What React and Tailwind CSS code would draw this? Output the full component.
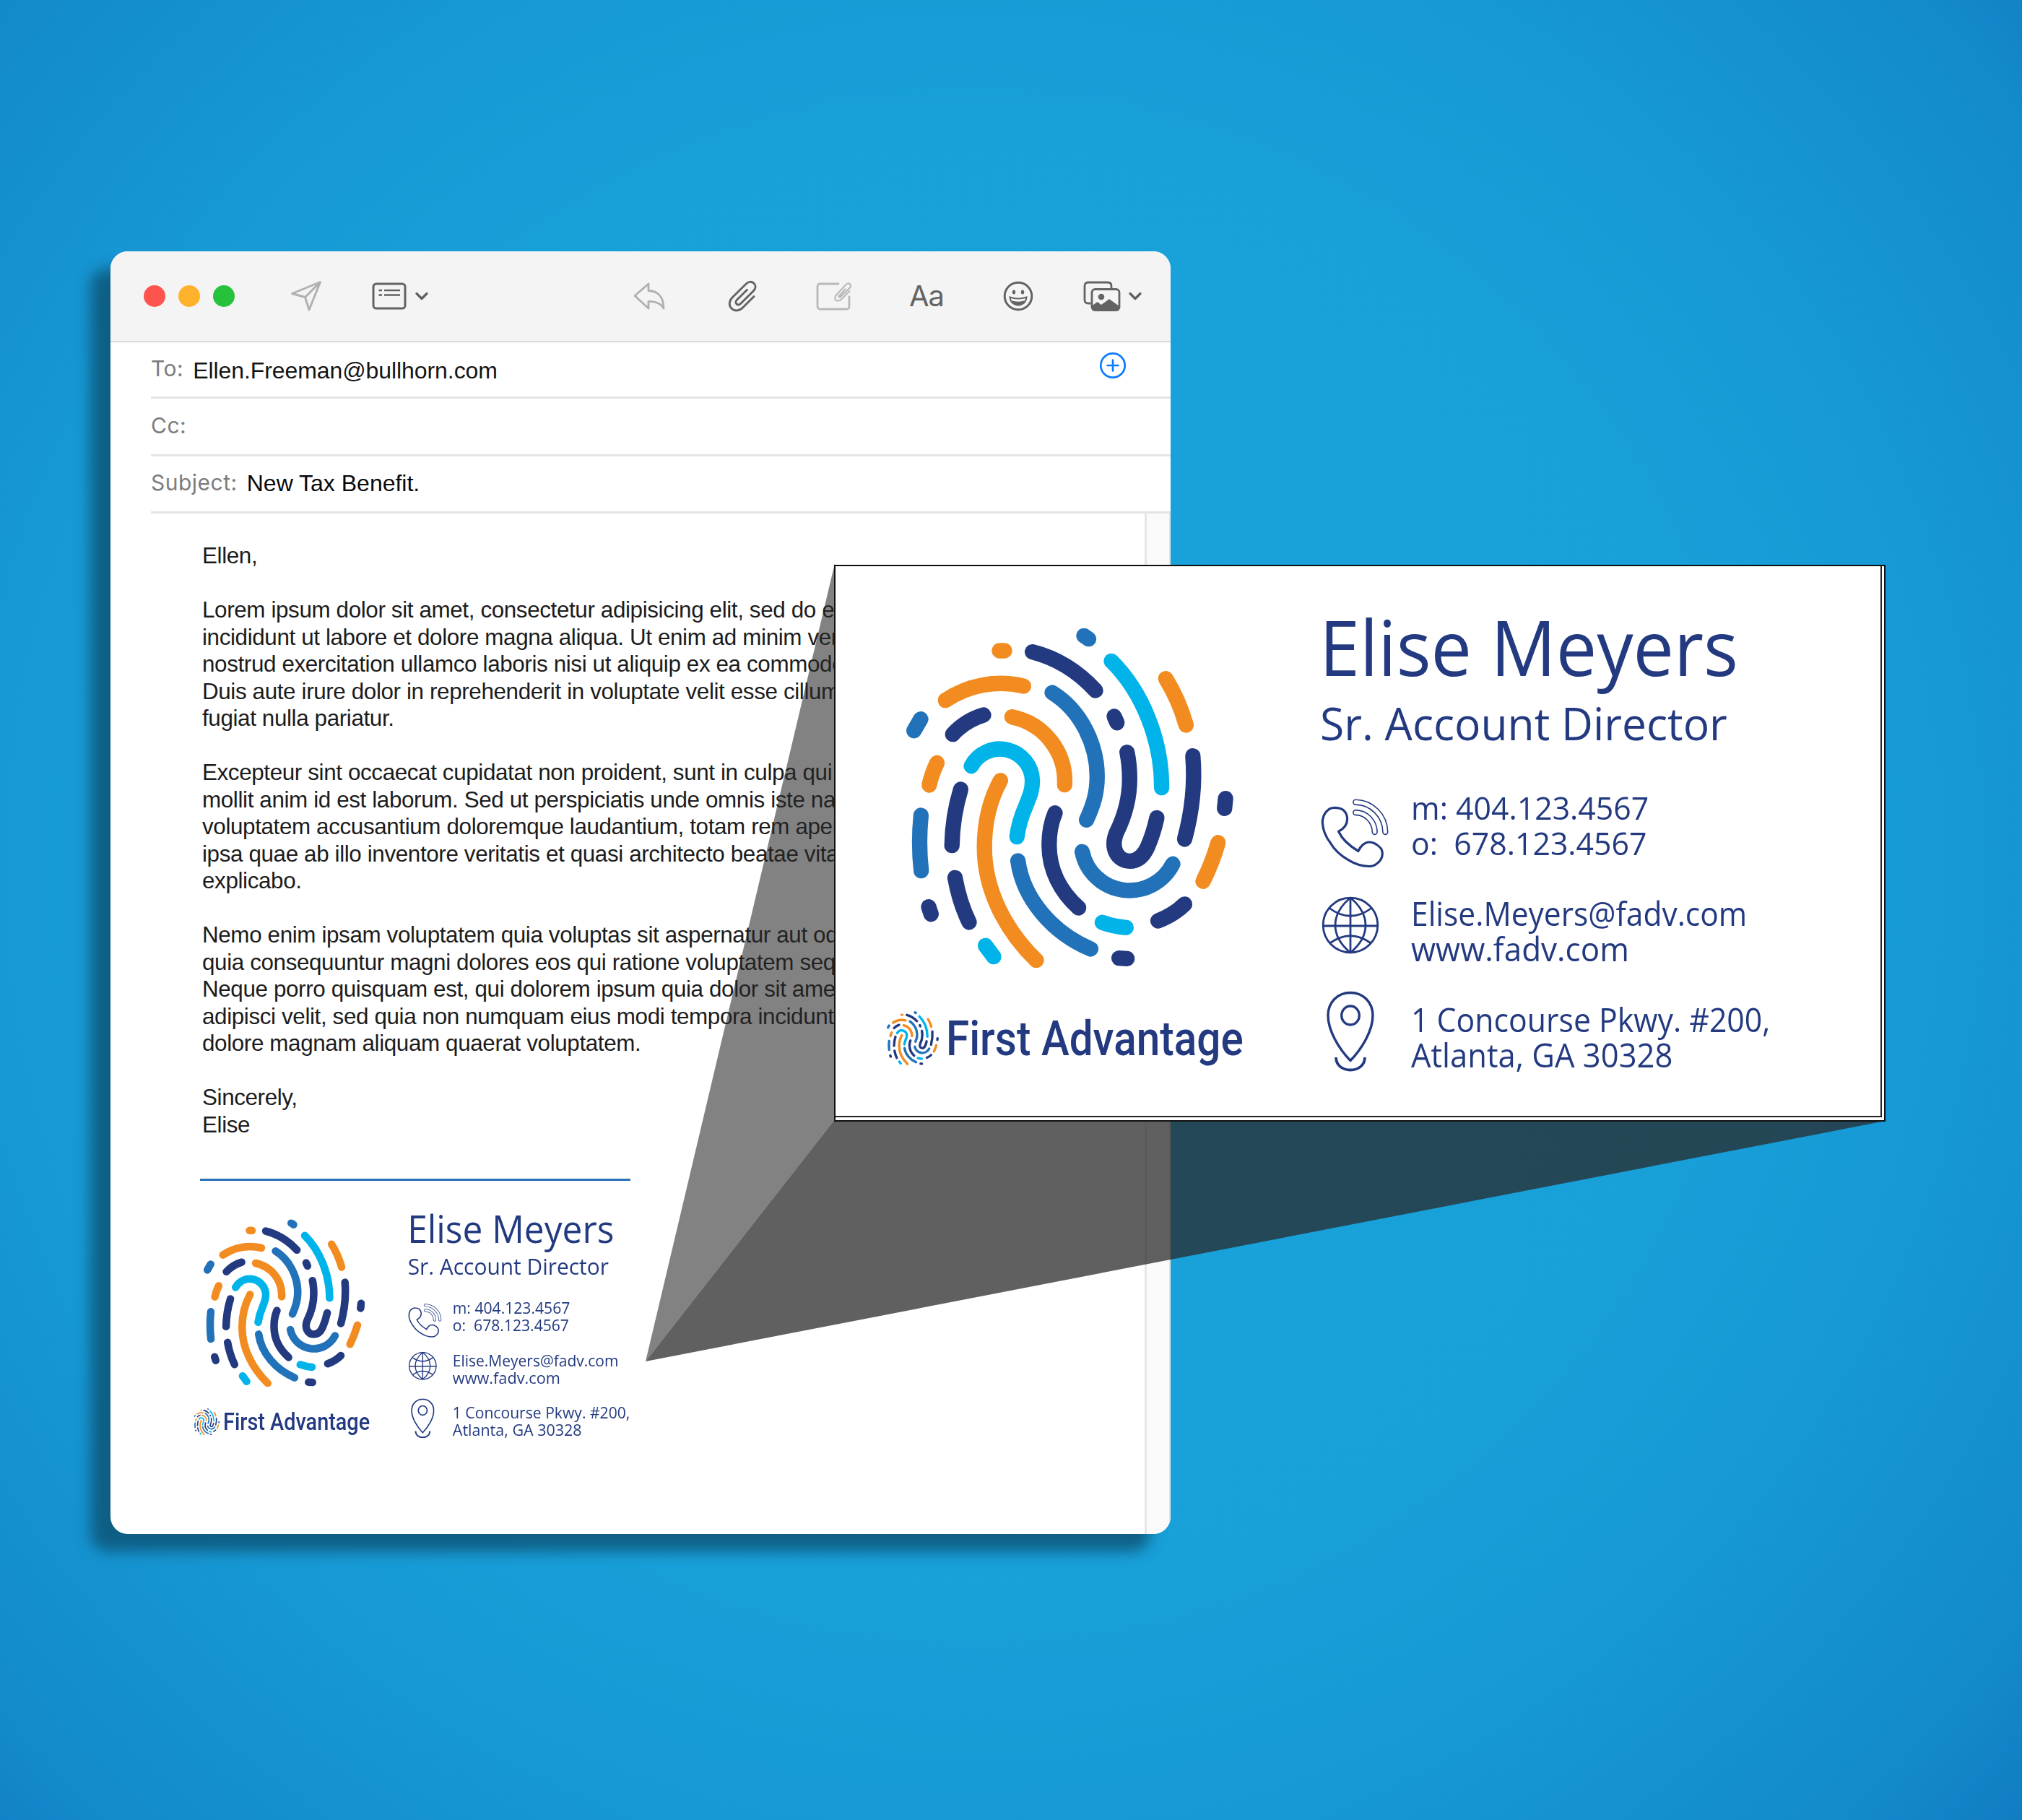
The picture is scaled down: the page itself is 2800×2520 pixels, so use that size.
const NAVY = "#233a80";
const BLUE = "#2272b9";
const CYAN = "#00b4ea";
const ORANGE = "#f28c20";

const RIDGES = [
  [BLUE, "M301 40.3 L307.5 44.7"],
  [ORANGE, "M184 61 L191 61"],
  [NAVY, "M229.6 62.7 Q279 75 317 116"],
  [CYAN, "M339 75.3 C382 118 409 185 408.6 250.7"],
  [ORANGE, "M414.3 99.7 Q432 128 442.5 164"],
  [ORANGE, "M109.3 129.7 A137 137 0 0 1 217.5 110"],
  [ORANGE, "M201.4 152.7 A91 91 0 0 1 274.3 246.7"],
  [CYAN, "M145 220.7 A45 45 0 0 1 229.6 241 C229.6 256 225 264 220.5 276 C213 293 210 305 208.2 318.7"],
  [NAVY, "M119.3 176.7 A94 94 0 0 1 162 150"],
  [BLUE, "M75 155.7 L65.7 171.7"],
  [ORANGE, "M97.5 216.3 Q90 232 86.8 247"],
  [NAVY, "M130.4 253 Q119 290 118.2 330.7"],
  [BLUE, "M75.4 289 Q71.4 328 75.7 365.7"],
  [BLUE, "M257 119 C296 143 319.3 190 319.3 235 C319.3 258 314 275 304.6 295.3"],
  [NAVY, "M342.9 152 L346.8 160.7"],
  [NAVY, "M360.7 201.7 Q364.3 219 364.3 238 C364.3 272 354 297 346 313 C337 335 348 352.3 364.3 352.3 C376 352.3 384 344 389 333 Q397 315 402 292.3"],
  [NAVY, "M451.8 206.7 Q456.5 263 440.4 322"],
  [NAVY, "M497.1 265.7 L495.7 279.3"],
  [ORANGE, "M486.8 326.7 Q479 354 466 380.3"],
  [NAVY, "M440.4 412 Q425 427 403.6 435"],
  [BLUE, "M298.6 339.3 A67 67 0 0 0 424 356.3"],
  [NAVY, "M261 285.7 C254 302 252.8 316 252.8 330 C252.8 364 268 394 293.6 417"],
  [ORANGE, "M185.4 240.7 C170 269 163.2 300 163.2 333 C163.2 392 192 448 235 489.7"],
  [BLUE, "M209.6 352 C217 405 258 452 310.4 474"],
  [CYAN, "M326.4 437.3 Q342 443 359.3 444.3"],
  [NAVY, "M349.6 486.7 L360.7 487.3"],
  [CYAN, "M164.6 469.3 L176 484.7"],
  [NAVY, "M122.5 375.3 Q128.5 408.8 142 437"],
  [NAVY, "M86 415.7 L89.3 425.7"],
];

function Fingerprint({ className }) {
  return (
    <svg viewBox="55 30 453 470" className={className} fill="none" strokeWidth="21.3" strokeLinecap="round">
      {RIDGES.map(([color, d]) => (
        <path key={d} d={d} stroke={color} />
      ))}
    </svg>
  );
}

function PhoneIcon() {
  return (
    <svg viewBox="28 27 96 96" className="h-24 w-24" fill="none" stroke={NAVY} strokeLinejoin="round" strokeLinecap="round">
      <path
        strokeWidth="3.2"
        d="M47.8 39.3 C39 39.3 31.3 48 31.3 60 C32 72 36 80 42.4 88.3 C48 98 57 106 67 111.7 C77 118 87 120.5 96 120.5 C101 120.5 103 119.5 105 118 C111 114 114.3 109 114.3 103.5 C114.3 99 113.5 97 111.6 95 C106 89 101 87 96 87 C90 87 84 92 81 99.5 C70 93 59 84 53.5 72.3 C60 69 65.6 63 65.6 55 C65.6 49 63 45 60 42.5 C57 40 52 39.3 47.8 39.3 Z"
      />
      <path strokeWidth="8.4" d="M77.3 31.7 A41.5 42 0 0 1 118.3 73" />
      <path strokeWidth="5.2" stroke="#fff" d="M77.3 31.7 A41.5 42 0 0 1 118.3 73" />
      <path strokeWidth="8.4" d="M77.3 46 A27 27.5 0 0 1 103.7 73" />
      <path strokeWidth="5.2" stroke="#fff" d="M77.3 46 A27 27.5 0 0 1 103.7 73" />
    </svg>
  );
}

function GlobeIcon() {
  return (
    <svg viewBox="0 0 80 80" className="h-20 w-20" fill="none" stroke={NAVY} strokeWidth="2.8">
      <circle cx="40" cy="40" r="37.8" />
      <path d="M40 2 V78 M2 41 H78" />
      <path d="M40 2 C12 25 12 55 40 78 C68 55 68 25 40 2" />
      <path d="M11 16.5 Q40 38 69 16.5 M11.5 65 Q40 44.5 68.5 65" />
    </svg>
  );
}

function PinIcon() {
  return (
    <svg viewBox="0 0 66 112" className="h-28 w-[66px]" fill="none" stroke={NAVY} strokeLinejoin="round">
      <path strokeWidth="3.4" d="M33 2.5 C15 2.5 2 16 2 34 C2 55 17 80 33 96.5 C49 80 64 55 64 34 C64 16 51 2.5 33 2.5 Z" />
      <ellipse strokeWidth="3.4" cx="33" cy="34" rx="12.3" ry="13" />
      <path strokeWidth="3.8" d="M13 92 C13 103 22 109.5 33 109.5 C44 109.5 53 103 53 92" />
    </svg>
  );
}

function Line({ children, className }) {
  return <div className={`origin-left whitespace-pre ${className}`}>{children}</div>;
}

/* Signature artwork at full size; the mail body shows the same block scaled down. */
function Signature() {
  return (
    <div className="flex h-[770px] w-[1455px] pl-[72px] font-['Open_Sans','Noto_Sans',sans-serif] text-[#233a80]">
      <div className="w-[600px] shrink-0 pt-[88px]">
        <Fingerprint className="ml-[27px] h-[470px] w-[453px]" />
        <div className="mt-[60px] flex">
          <Fingerprint className="h-[75px] w-[72px]" />
          <Line className="ml-[10px] h-[80px] w-[420px] scale-x-[0.886] font-['Roboto',sans-serif] text-[66px] leading-[78px] font-medium">
            First Advantage
          </Line>
        </div>
      </div>
      <div className="flex flex-col pt-[48px]">
        <Line className="ml-[-1px] h-[130px] w-[600px] scale-x-[0.94] text-[107px] leading-[130px]">Elise Meyers</Line>
        <Line className="mt-[1px] h-[80px] w-[600px] scale-x-[0.977] text-[62px] leading-[80px]">Sr. Account Director</Line>
        <div className="mt-[53px] flex h-[98px]">
          <div className="w-[126px] pt-[12px]">
            <PhoneIcon />
          </div>
          <div className="text-[44px] leading-[49px]">
            <Line className="w-[360px] scale-x-[0.973]">m: 404.123.4567</Line>
            <Line className="w-[360px] scale-x-[0.973]">{"o:  678.123.4567"}</Line>
          </div>
        </div>
        <div className="mt-[48px] flex h-[98px]">
          <div className="w-[126px] pt-px pl-[2px]">
            <GlobeIcon />
          </div>
          <div className="text-[45px] leading-[49px]">
            <Line className="w-[500px] scale-x-[0.945]">Elise.Meyers@fadv.com</Line>
            <Line className="w-[500px] scale-x-[0.978]">www.fadv.com</Line>
          </div>
        </div>
        <div className="mt-[32px] flex">
          <div className="w-[126px] pt-[2px] pl-[9px]">
            <PinIcon />
          </div>
          <div className="pt-[17px] text-[45px] leading-[49px]">
            <Line className="w-[520px] scale-x-[0.951]">1 Concourse Pkwy. #200,</Line>
            <Line className="w-[520px] scale-x-[0.968]">Atlanta, GA 30328</Line>
          </div>
        </div>
      </div>
    </div>
  );
}

function Chevron({ className }) {
  return (
    <svg viewBox="0 0 18 12" className={className} fill="none" stroke="#5f5f5f" strokeWidth="3.2" strokeLinecap="round" strokeLinejoin="round">
      <path d="M2 2.5 L9 9.5 L16 2.5" />
    </svg>
  );
}

function Toolbar() {
  return (
    <div className="flex h-[126px] items-center border-b-[2px] border-[#dadada] bg-[#f5f4f5] pl-[46px]">
      <span className="h-[30px] w-[30px] rounded-full bg-[#fe544e]" />
      <span className="ml-[18px] h-[30px] w-[30px] rounded-full bg-[#feb12b]" />
      <span className="ml-[18px] h-[30px] w-[30px] rounded-full bg-[#26c23c]" />
      <svg viewBox="0 0 44 44" className="ml-[77px] h-11 w-11" fill="none" stroke="#b0b0b0" strokeWidth="2.9" strokeLinejoin="round">
        <path d="M41.5 2.5 L2.5 18.5 L20.5 23.5 L26 41 Z M41.5 2.5 L20.5 23.5" />
      </svg>
      <svg viewBox="0 0 48 38" className="ml-[69px] h-[38px] w-12" fill="none" stroke="#636363" strokeWidth="3">
        <rect x="2" y="2" width="44" height="34" rx="4" />
        <path strokeWidth="2.4" d="M9.5 11 H14 M17 11 H39 M9.5 17.5 H14 M17 17.5 H39" />
      </svg>
      <Chevron className="ml-[12px] h-3 w-[18px]" />
      <svg viewBox="0 0 44 38" className="ml-[284px] h-[38px] w-11" fill="none" stroke="#b0b0b0" strokeWidth="2.8" strokeLinejoin="round">
        <path d="M21 2 L2 18.5 L21 36 V26.5 C31 26 37.5 28.5 42 36 C42 21 35 12 21 11.5 Z" />
      </svg>
      <svg viewBox="0 0 40 44" className="ml-[87px] h-11 w-10" fill="none" stroke="#636363" strokeWidth="2.9" strokeLinecap="round">
        <path d="M36 22.5 L20.5 38 C16 42.5 9.5 43.5 5.2 39.2 C0.8 35 1.6 28.5 6 24 L25.5 4.8 C28.5 1.8 33 1.4 36 4.2 C39 7.2 38.5 11.6 35.5 14.7 L17.5 32.5 C15.8 34.2 13.6 34.4 12 32.9 C10.4 31.3 10.7 29 12.4 27.3 L26.5 13.2" />
      </svg>
      <svg viewBox="0 0 50 40" className="ml-[82px] h-10 w-[50px]" fill="none" stroke="#b9b9b9" strokeWidth="2.8" strokeLinecap="round">
        <path d="M31 3 H6 Q2 3 2 7 V34 Q2 38 6 38 H42 Q46 38 46 34 V21" />
        <path strokeWidth="2.2" d="M46.5 13 L35 24.5 C32.5 27 29 27 27.5 25.5 C25.7 23.5 26 20.5 28 18.5 L41.5 4 C43.5 2 45.5 2 47 3.4 C48.5 5 48.2 7 46.8 8.5 L34 21 C33 22 31.6 21.8 31.6 20.2 L40.5 10.5" />
      </svg>
      <span className="ml-[79px] w-[52px] font-['Inter',sans-serif] text-[40px] leading-none tracking-[-1px] text-[#636363]">Aa</span>
      <svg viewBox="0 0 42 42" className="ml-[78px] h-[42px] w-[42px]" fill="none" stroke="#636363" strokeWidth="3">
        <circle cx="21" cy="21" r="18.8" />
        <ellipse cx="15" cy="15.5" rx="2.2" ry="3" fill="#636363" stroke="none" />
        <ellipse cx="27" cy="15.5" rx="2.2" ry="3" fill="#636363" stroke="none" />
        <path strokeWidth="2" d="M9.5 22.5 Q21 26.5 32.5 22.5 C32 29.5 27 33.5 21 33.5 C15 33.5 10 29.5 9.5 22.5 Z" />
        <path fill="#636363" stroke="none" d="M11.5 27 Q21 30.5 30.5 27 C28.5 31.5 25 33 21 33 C17 33 13.5 31.5 11.5 27 Z" />
      </svg>
      <svg viewBox="0 0 52 42" className="ml-[69px] h-[42px] w-[52px]" fill="none" stroke="#636363" strokeWidth="2.8">
        <path d="M10.5 31 H7 Q2 31 2 26 V7 Q2 2 7 2 H34 Q39 2 39 7 V10" />
        <rect x="12" y="11.500" width="38" height="29" rx="4.500" />
        <circle cx="25" cy="22" r="4.300" fill="#636363" stroke="none" />
        <path fill="#636363" stroke="none" d="M12 34.500 L19.500 29 L25 33 L36 25 L50 35 V40.500 H12 Z" />
      </svg>
      <Chevron className="ml-[11px] h-3 w-[18px]" />
    </div>
  );
}

function Field({ label, children, className }) {
  return (
    <div className={`ml-[56px] flex border-b-[3px] border-[#e4e4e4] whitespace-pre ${className}`}>
      <span className="font-['Inter',sans-serif] text-[30px] tracking-[0.5px] text-[#7c7c7c]">{label}</span>
      {children}
    </div>
  );
}

const PARAGRAPHS = [
  ["Ellen,"],
  [
    "Lorem ipsum dolor sit amet, consectetur adipisicing elit, sed do eiusmod tempor",
    "incididunt ut labore et dolore magna aliqua. Ut enim ad minim veniam, quis",
    "nostrud exercitation ullamco laboris nisi ut aliquip ex ea commodo consequat.",
    "Duis aute irure dolor in reprehenderit in voluptate velit esse cillum dolore eu",
    "fugiat nulla pariatur.",
  ],
  [
    "Excepteur sint occaecat cupidatat non proident, sunt in culpa qui officia",
    "mollit anim id est laborum. Sed ut perspiciatis unde omnis iste natus error",
    "voluptatem accusantium doloremque laudantium, totam rem aperiam, eaque",
    "ipsa quae ab illo inventore veritatis et quasi architecto beatae vitae dicta",
    "explicabo.",
  ],
  [
    "Nemo enim ipsam voluptatem quia voluptas sit aspernatur aut odit aut",
    "quia consequuntur magni dolores eos qui ratione voluptatem sequi",
    "Neque porro quisquam est, qui dolorem ipsum quia dolor sit amet,",
    "adipisci velit, sed quia non numquam eius modi tempora incidunt",
    "dolore magnam aliquam quaerat voluptatem.",
  ],
  ["Sincerely,", "Elise"],
];

function MailWindow() {
  return (
    <div className="absolute top-[348px] left-[153px] flex h-[1776px] w-[1468px] flex-col overflow-hidden rounded-[24px] bg-white">
      <Toolbar />
      <Field label="To:" className="h-[78px] leading-[72px]">
        <span className="ml-[13px] pt-[3px] text-[32px] tracking-[-0.08px] text-[#141414]">Ellen.Freeman@bullhorn.com</span>
        <svg viewBox="0 0 38 38" className="mt-[13px] mr-[61px] ml-auto h-[38px] w-[38px]" fill="none" stroke="#0a7aff" strokeWidth="2.7" strokeLinecap="round">
          <circle cx="19" cy="19" r="16.7" />
          <path d="M19 11.500 V26.500 M11.500 19 H26.500" />
        </svg>
      </Field>
      <Field label="Cc:" className="h-[80px] leading-[74px]" />
      <Field label="Subject:" className="h-[79px] leading-[73px]">
        <span className="ml-[13px] pt-[1px] text-[32px] text-[#0a0a0a]">New Tax Benefit.</span>
      </Field>
      <div className="flex flex-1">
        <div className="w-[1432px] shrink-0 pt-[40px] pl-[127px]">
          {PARAGRAPHS.map((lines) => (
            <p key={lines[0]} className="mb-[37.500px] text-[31.4px] leading-[37.500px] tracking-[-0.38px] whitespace-pre text-[#1c1c1c]">
              {lines.map((line) => (
                <span key={line} className="block">{line}</span>
              ))}
            </p>
          ))}
          <div className="mt-[56px] ml-[-3px] h-[3px] w-[596px] bg-[#2a72b8]" />
          <div className="mt-[10px] ml-[-47px] h-[380px] w-[717px]">
            <div className="h-[770px] w-[1455px] origin-top-left scale-[0.4935]">
              <Signature />
            </div>
          </div>
        </div>
        <div className="flex-1 border-r-2 border-l-[3px] border-[#e6e6e6] bg-[#fafafa]" />
      </div>
    </div>
  );
}

export default function App() {
  return (
    <div className="relative h-[2520px] w-[2800px] overflow-hidden bg-[radial-gradient(circle_2050px_at_1350px_1200px,#1aa3db_0%,#18a0d9_50%,#1698d4_68%,#138acb_87%,#0f76bd_100%)] font-['Liberation_Sans',Arial,sans-serif]">
      <div className="absolute top-[372px] left-[125px] h-[1776px] w-[1468px] rounded-[24px] bg-[#0d5577]/85 blur-[10px]" />
      <MailWindow />
      <svg viewBox="0 0 2800 2520" className="absolute inset-0 h-full w-full">
        <path d="M1156 780 L1156 1550 L894 1885 Z" fill="#282828" fillOpacity="0.58" />
        <path d="M1156 1550 L2611 1552 L894 1885 Z" fill="#282828" fillOpacity="0.74" />
      </svg>
      <div className="absolute top-[782px] left-[1155px] h-[771px] w-[1456px] border-2 border-[#111] bg-white">
        <div className="h-[765px] w-[1449px] border-r-2 border-b-2 border-[#222]">
          <div className="-mt-[2px] -ml-px">
            <Signature />
          </div>
        </div>
      </div>
    </div>
  );
}
